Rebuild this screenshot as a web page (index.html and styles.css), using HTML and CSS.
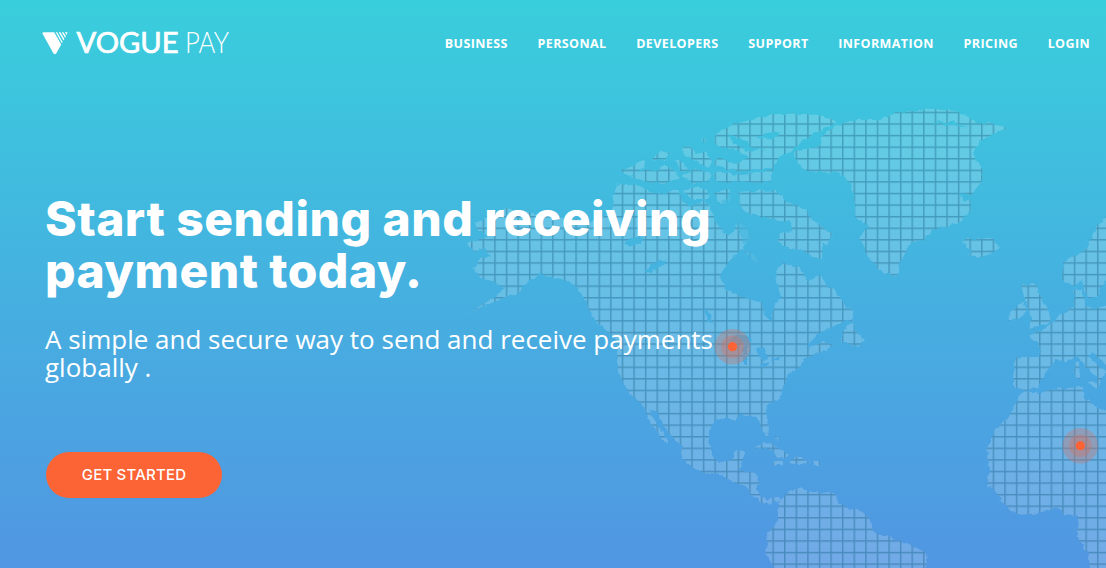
FILE: index.html
```
<!DOCTYPE html>
<html lang="en">
<head>
<meta charset="utf-8">
<title>VoguePay</title>
<link rel="stylesheet" href="styles.css">
</head>
<body>
<div class="hero">
  <svg class="map" viewBox="0 0 1106 568" aria-hidden="true">
    <defs>
      <pattern id="grid" x="482.6" y="111.7" width="11.592" height="11.582" patternUnits="userSpaceOnUse">
        <path class="grid-line" d="M.75 0V11.6M0 .75H11.6"/>
      </pattern>
      <filter id="coast" x="0" y="0" width="100%" height="100%">
        <feTurbulence type="fractalNoise" baseFrequency=".16" numOctaves="3" seed="4" result="n"/>
        <feDisplacementMap in="SourceGraphic" in2="n" scale="5" xChannelSelector="R" yChannelSelector="G"/>
      </filter>
      <mask id="land" maskUnits="userSpaceOnUse" x="0" y="0" width="1106" height="568">
        <g filter="url(#coast)">
          <rect width="1140" height="600" fill="#000"/>
          <g fill="#fff">
            <!-- North and Central America -->
            <path d="M475 223L487 217L505 208L523 211L545 216L570 219L590 222L606 216L613 209L613 197L618 185L630 185L640 186L653 193L665 193L677 190L683 202L690 206L703 201L710 207L713 216L717 224L727 235L732 232L738 222L744 226L750 237L744 248L728 262L719 277L727 290L743 297L762 303L764 315L772 322L773 307L781 297L776 281L777 270L783 262L800 268L808 282L820 275L825 282L836 293L843 302L853 312L851 320L838 324L830 329L820 332L813 339L806 347L813 346L824 341L833 345L820 353L804 359L800 367L788 373L784 388L780 398L768 405L765 412L769 428L768 437L762 430L757 417L740 415L735 420L724 418L714 421L709 431L709 445L712 455L719 462L728 461L733 458L735 451L746 451L742 460L741 472L750 472L758 475L757 491L761 497L768 500L774 497L782 498L778 504L774 500L770 504L763 502L751 495L747 487L738 483L730 480L722 474L712 473L701 472L690 466L682 459L682 446L668 432L660 420L656 411L649 408L652 415L657 425L663 432L669 444L661 438L655 427L648 420L645 410L640 402L630 395L621 378L617 365L617 345L612 335L603 328L595 320L590 310L586 301L577 288L568 281L552 277L541 274L532 278L523 286L519 293L505 297L487 305L469 313L485 303L496 296L504 288L493 281L480 278L474 268L479 260L490 256L485 248L473 251L467 243L480 239L489 236L479 231Z"/>
            <!-- Baffin Island -->
            <path d="M737 192L757 190L777 191L787 202L807 210L813 221L832 234L827 246L822 242L822 258L812 257L800 250L790 248L777 241L780 234L792 232L791 223L780 220L767 218L757 216L745 212L740 204Z"/>
            <path d="M743 249L752 252L759 262L754 260L748 257Z"/>
            <!-- Ellesmere and the Arctic islands -->
            <path d="M715 145L716 134L733 124L757 118L777 114L807 114L830 118L837 122L823 130L813 134L800 143L790 152L779 157L773 170L769 182L753 183L742 181L718 183L713 174L726 169L713 163L720 159L738 164L748 157L738 151Z"/>
            <path d="M683 148L691 146L695 154L706 152L712 162L708 168L694 159L684 156ZM651 159L661 151L669 153L665 160ZM622 171L634 164L646 159L644 168L634 176L624 174ZM631 177L646 169L656 172L664 165L673 169L680 178L665 183L648 182ZM676 160L683 162L689 171L680 172ZM682 177L694 169L711 174L708 181L693 183ZM683 191L697 187L708 190L709 199L693 199ZM714 193L729 190L732 199L720 205ZM701 140L706 138L705 144Z"/>
            <!-- Newfoundland -->
            <path d="M841 341L844 330L853 320L855 330L865 341L857 346Z"/>
            <!-- Greenland -->
            <path d="M793 153L805 149L820 146L821 136L837 125L857 120L880 120L895 113L927 109L950 109L968 116L977 123L991 123L1006 128L993 134L982 140L973 152L977 162L983 170L982 181L970 196L971 211L957 223L933 230L923 240L910 243L901 260L897 277L878 270L868 257L860 237L868 225L855 217L855 197L850 183L841 173L820 172L807 171L799 165Z"/>
            <path d="M962 243L966 238L974 240L982 239L992 237L999 247L992 253L982 257L968 255L970 249Z"/>
            <!-- Caribbean -->
            <path d="M753 449L763 443L773 444L788 455L786 458L779 457L770 449ZM788 463L797 456L810 462L798 465ZM813 461H821V465H813ZM774 461H783V465H774ZM774 437L779 437L778 441Z"/>
            <!-- South America -->
            <path d="M778 506L783 496L798 487L808 491L820 493L833 492L837 500L847 508L863 512L870 520L873 532L888 536L898 541L910 544L926 553L927 563L922 580H775L773 563L765 551L768 543L767 533L778 522Z"/>
            <!-- Europe -->
            <path d="M1130 205L1106 217L1097 226L1087 248L1063 263L1063 280L1074 286L1082 280L1088 298L1098 297L1103 283L1130 262Z"/>
            <path d="M1075 307L1073 291L1083 290L1084 304L1092 309L1130 300V375L1106 364L1092 352L1088 356L1106 372L1101 380L1098 388L1097 377L1085 366L1077 355L1065 362L1056 360L1045 373L1038 388L1023 391L1014 387L1015 357L1040 357L1038 342L1028 336L1040 331L1053 322L1063 313Z"/>
            <path d="M1021 285L1037 284L1039 295L1043 303L1051 317L1048 323L1028 329L1032 318L1028 310L1025 300ZM1011 310L1023 302L1027 310L1021 318L1008 321ZM1075 363L1079 361L1080 378L1075 378ZM1087 383L1098 382L1097 389Z"/>
            <!-- Africa -->
            <path d="M1023 391L1040 393L1053 389L1082 387L1084 398L1097 407L1130 418V600H1094L1088 553L1077 537L1078 517L1065 515L1057 507L1040 513L1017 515L1003 503L993 488L987 487L990 467L986 450L995 430L1010 417L1013 407Z"/>
          </g>
          <!-- lakes and straits -->
          <g fill="#000">
            <path d="M624 244L631 238L643 236L640 243L628 248ZM644 271L652 264L666 259L662 265L651 273ZM704 308L709 313L713 324L708 320ZM743 348L746 336L751 338L747 350L747 364L743 364ZM756 349L765 348L768 358L763 362L759 358ZM758 366L769 362L768 366ZM770 359L781 357L779 361ZM728 341L738 333L750 338L747 343L735 342Z"/>
            <path d="M718 205L726 202L728 216L736 222L744 246L748 262L773 264L779 248L765 234L781 224L745 212L738 200L742 193L732 192L724 200Z" fill-opacity=".6"/>
            <path d="M728 134L748 142L752 148L766 149L747 151L733 143ZM714 168L745 171L771 168L771 171L742 175L717 172ZM929 123L954 122L969 129L953 125ZM960 193L974 197L964 202ZM768 133L780 132L773 139L757 138Z"/>
          </g>
        </g>
      </mask>
    </defs>
    <g mask="url(#land)">
      <rect class="land" width="1106" height="568"/>
      <rect width="1106" height="568" fill="url(#grid)"/>
    </g>
    <g class="marker" transform="translate(732.5 346.7)"><circle class="halo" r="17.8"/><circle class="halo" r="11.3"/><circle r="4.6"/></g>
    <g class="marker" transform="translate(1080.3 445.7)"><circle class="halo" r="17.8"/><circle class="halo" r="11.3"/><circle r="4.6"/></g>
  </svg>

  <header class="header">
    <a class="brand" href="#">
      <svg class="logo" width="190" height="30" viewBox="0 0 190 30" role="img" aria-label="Vogue Pay">
        <path d="M.3 4.2Q.3 3.3 2 3.3H12.2L19.2 15.5 14.3 24.2Q12.7 26.2 11.2 24Z"/>
        <path d="M13.7 3.3H15.2L20.6 13 19.9 14.3ZM16.7 3.3H18.4L22.4 10 21.5 11.4ZM19.8 3.3H21.4L24 7.3 23.1 8.8ZM22.8 3.3H25.5L24.8 6.1Z"/>
        <text class="logo-bold" x="34.5" y="23.5" textLength="102" lengthAdjust="spacingAndGlyphs">VOGUE</text>
        <text class="logo-light" x="143" y="23.5" textLength="44" lengthAdjust="spacingAndGlyphs">PAY</text>
      </svg>
    </a>
    <nav class="nav">
      <a href="#">BUSINESS</a>
      <a href="#">PERSONAL</a>
      <a href="#">DEVELOPERS</a>
      <a href="#">SUPPORT</a>
      <a href="#">INFORMATION</a>
      <a href="#">PRICING</a>
      <a href="#">LOGIN</a>
    </nav>
  </header>

  <main class="intro">
    <h1 class="title">Start sending and receiving<br>payment today.</h1>
    <p class="lead">A simple and secure way to send and receive payments<br>globally .</p>
    <a class="button" href="#">GET STARTED</a>
  </main>
</div>
</body>
</html>
```
FILE: styles.css
```
* { box-sizing: border-box; }
body { margin: 0; }
a { color: inherit; text-decoration: none; }

.hero {
  position: relative;
  height: 568px;
  overflow: hidden;
  color: #fff;
  background: linear-gradient(#39cedc, #45b1e0 50%, #5196e2);
  font-family: "Open Sans", sans-serif;
}

.map {
  position: absolute;
  inset: 0;
  width: 1106px;
  height: 568px;
}
.land { fill: #fff; fill-opacity: .19; }
.grid-line { fill: none; stroke: #145f86; stroke-opacity: .42; stroke-width: 1.4; }
.marker { fill: #fc6435; }
.halo { fill: #d4705f; fill-opacity: .33; }

.header {
  position: relative;
  display: flex;
  justify-content: space-between;
  padding: 29px 16px 0 42px;
}
.brand { display: block; height: 30px; }
.logo { display: block; fill: #fff; overflow: visible; }
.logo-bold { font: 400 28.5px Lato, sans-serif; stroke: #fff; stroke-width: .7px; }
.logo-light { font: 300 28.5px Lato, sans-serif; }

.nav {
  display: flex;
  gap: 29.7px;
  font-size: 12.5px;
  font-weight: 700;
  line-height: 30px;
  letter-spacing: .4px;
  white-space: nowrap;
}

.intro {
  position: relative;
  padding: 134px 0 0 45px;
}
.title {
  margin: 0;
  font: 800 48px/52px Inter, sans-serif;
  letter-spacing: .45px;
  white-space: nowrap;
}
.lead {
  margin: 28px 0 0;
  font-size: 26px;
  line-height: 28px;
  white-space: nowrap;
}
.button {
  display: flex;
  align-items: center;
  justify-content: center;
  width: 176px;
  height: 46px;
  margin: 71px 0 0 1px;
  padding-bottom: 2px;
  border-radius: 23px;
  background: #fc6435;
  font: 500 15px Inter, sans-serif;
  letter-spacing: .2px;
}
```
